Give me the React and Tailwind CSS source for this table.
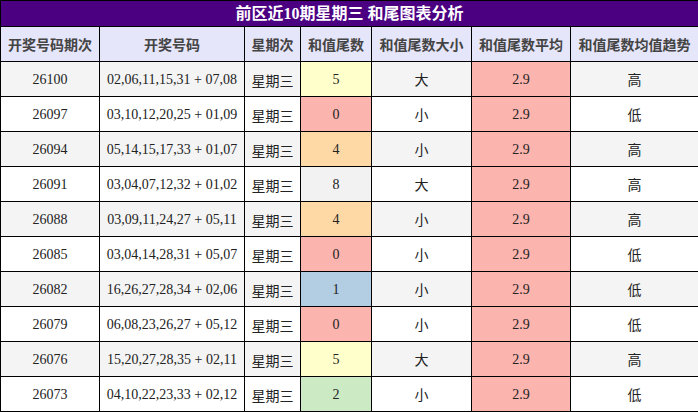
const rows = [
  { no: '26100', nums: '02,06,11,15,31 + 07,08', tail: '5', bg: 'bg-[#ffffcc]', size: '大', trend: '高' },
  { no: '26097', nums: '03,10,12,20,25 + 01,09', tail: '0', bg: 'bg-[#fbb4ae]', size: '小', trend: '低' },
  { no: '26094', nums: '05,14,15,17,33 + 01,07', tail: '4', bg: 'bg-[#fed9a6]', size: '小', trend: '高' },
  { no: '26091', nums: '03,04,07,12,32 + 01,02', tail: '8', bg: 'bg-[#f2f2f2]', size: '大', trend: '高' },
  { no: '26088', nums: '03,09,11,24,27 + 05,11', tail: '4', bg: 'bg-[#fed9a6]', size: '小', trend: '高' },
  { no: '26085', nums: '03,04,14,28,31 + 05,07', tail: '0', bg: 'bg-[#fbb4ae]', size: '小', trend: '低' },
  { no: '26082', nums: '16,26,27,28,34 + 02,06', tail: '1', bg: 'bg-[#b3cde3]', size: '小', trend: '低' },
  { no: '26079', nums: '06,08,23,26,27 + 05,12', tail: '0', bg: 'bg-[#fbb4ae]', size: '小', trend: '低' },
  { no: '26076', nums: '15,20,27,28,35 + 02,11', tail: '5', bg: 'bg-[#ffffcc]', size: '大', trend: '高' },
  { no: '26073', nums: '04,10,22,23,33 + 02,12', tail: '2', bg: 'bg-[#ccebc5]', size: '小', trend: '低' },
];

const heads = ['开奖号码期次', '开奖号码', '星期次', '和值尾数', '和值尾数大小', '和值尾数平均', '和值尾数均值趋势'];

export default function App() {
  return (
    <div className="w-[698px] h-[412px] bg-white overflow-hidden font-['Liberation_Serif','Noto_Sans_CJK_SC',serif] text-[14px] text-[#222]">
      <table className="w-[698px] table-fixed border-collapse">
        <colgroup>
          <col className="w-[99px]" />
          <col className="w-[145px]" />
          <col className="w-[56px]" />
          <col className="w-[71px]" />
          <col className="w-[100px]" />
          <col className="w-[99px]" />
          <col className="w-[128px]" />
        </colgroup>
        <thead>
          <tr className="h-[26px]">
            <th colSpan={7} className="border border-black bg-[#4b0082] text-white text-[16px] font-bold p-0 leading-none">
              前区近10期星期三 和尾图表分析
            </th>
          </tr>
          <tr className="h-[35px]">
            {heads.map((h) => (
              <th key={h} className="border border-black bg-[#e6e6fa] text-[#444] font-['Noto_Sans_CJK_SC',sans-serif] font-bold text-[14px] p-0 whitespace-nowrap">
                {h}
              </th>
            ))}
          </tr>
        </thead>
        <tbody>
          {rows.map((r, i) => (
            <tr key={r.no} className={'h-[35px] ' + (i % 2 === 0 ? 'bg-[#f4f4f4]' : 'bg-white')}>
              <td className="border border-black text-center p-0">{r.no}</td>
              <td className="border border-black text-center p-0 whitespace-nowrap">{r.nums}</td>
              <td className="border border-black text-center p-0 font-['Noto_Sans_CJK_SC',sans-serif] pt-[3px]">星期三</td>
              <td className={'border border-black text-center p-0 ' + r.bg}>{r.tail}</td>
              <td className="border border-black text-center p-0 font-['Noto_Sans_CJK_SC',sans-serif]">{r.size}</td>
              <td className="border border-black text-center p-0 bg-[#fbb4ae]">2.9</td>
              <td className="border border-black text-center p-0 font-['Noto_Sans_CJK_SC',sans-serif]">{r.trend}</td>
            </tr>
          ))}
        </tbody>
      </table>
    </div>
  );
}
